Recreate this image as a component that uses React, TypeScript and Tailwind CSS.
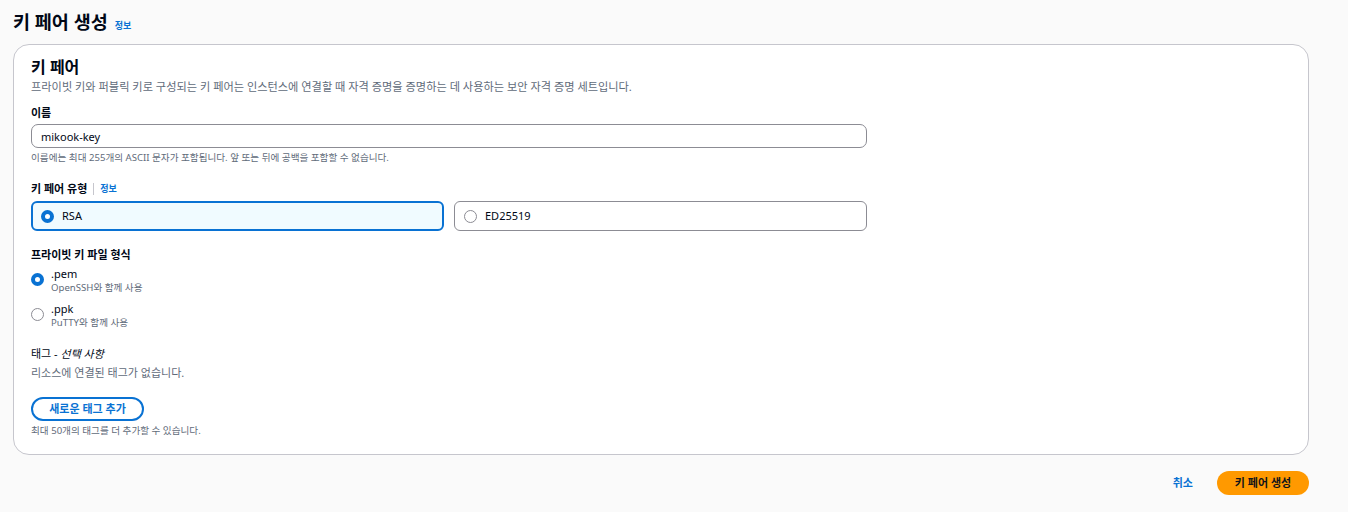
import React, { useState } from 'react';

const font = { fontFamily: '"Noto Sans", "Noto Sans CJK KR", sans-serif' };

function Radio({ checked }: { checked: boolean }) {
  return checked ? (
    <span className="inline-block w-[13px] h-[13px] rounded-full border-[4px] border-[#0972d3] bg-white shrink-0" />
  ) : (
    <span className="inline-block w-[13px] h-[13px] rounded-full border border-[#8c8c94] bg-white shrink-0" />
  );
}

export default function App() {
  const [name, setName] = useState('mikook-key');
  const [keyType, setKeyType] = useState('RSA');
  const [format, setFormat] = useState('pem');

  return (
    <div className="min-h-screen bg-[#fafafa] text-[#000716] px-[13px] pt-[6px]" style={font}>
      <div className="flex items-baseline gap-[7px] h-[32px]">
        <h1 className="text-[18.5px] font-bold leading-[32px]">키 페어 생성</h1>
        <a className="text-[9px] font-bold text-[#0972d3]">정보</a>
      </div>

      <div className="mt-[6px] bg-white border border-[#c6c6cd] rounded-[16px] px-[17px] pt-[12px] pb-[16px] w-[1296px]">
        <h2 className="text-[16px] font-bold leading-[20px]">키 페어</h2>
        <p className="text-[11.2px] text-[#5f6b7a] leading-[16px] mt-[2px]">
          프라이빗 키와 퍼블릭 키로 구성되는 키 페어는 인스턴스에 연결할 때 자격 증명을 증명하는 데 사용하는 보안 자격 증명 세트입니다.
        </p>

        <div className="mt-[10px] w-[836px]">
          <label className="block text-[11px] font-bold leading-[16px]">이름</label>
          <input
            value={name}
            onChange={(e) => setName(e.target.value)}
            className="mt-[3px] w-full h-[24px] border border-[#8c8c94] rounded-[7px] px-[9px] text-[11px] outline-none"
          />
          <p className="text-[9.6px] text-[#5f6b7a] leading-[14px] mt-[3px]">
            이름에는 최대 255개의 ASCII 문자가 포함됩니다. 앞 또는 뒤에 공백을 포함할 수 없습니다.
          </p>
        </div>

        <div className="mt-[16px] w-[836px]">
          <div className="flex items-center gap-[6px] text-[11px] leading-[16px]">
            <span className="font-bold">키 페어 유형</span>
            <span className="w-px h-[12px] bg-[#c6c6cd]" />
            <a className="text-[9px] font-bold text-[#0972d3]">정보</a>
          </div>
          <div className="mt-[4px] grid grid-cols-2 gap-[10px]">
            {['RSA', 'ED25519'].map((t) => (
              <button
                key={t}
                onClick={() => setKeyType(t)}
                className={
                  keyType === t
                    ? 'h-[30px] flex items-center gap-[8px] px-[8px] rounded-[6px] border-2 border-[#0972d3] bg-[#f0fbff] text-[11px] text-left'
                    : 'h-[30px] flex items-center gap-[8px] px-[9px] rounded-[6px] border border-[#8c8c94] bg-white text-[11px] text-left'
                }
              >
                <Radio checked={keyType === t} />
                {t}
              </button>
            ))}
          </div>
        </div>

        <div className="mt-[16px]">
          <div className="text-[11px] font-bold leading-[16px]">프라이빗 키 파일 형식</div>
          <div className="mt-[3px] flex flex-col gap-[6px]">
            {[
              { id: 'pem', label: '.pem', sub: 'OpenSSH와 함께 사용' },
              { id: 'ppk', label: '.ppk', sub: 'PuTTY와 함께 사용' },
            ].map((o) => (
              <div key={o.id} className="flex gap-[7px] cursor-pointer" onClick={() => setFormat(o.id)}>
                <div className="pt-[2px]">
                  <Radio checked={format === o.id} />
                </div>
                <div>
                  <div className="text-[11px] leading-[15px]">{o.label}</div>
                  <div className="text-[9.6px] text-[#5f6b7a] leading-[14px]">{o.sub}</div>
                </div>
              </div>
            ))}
          </div>
        </div>

        <div className="mt-[16px]">
          <div className="text-[11px] leading-[16px]">
            태그 - <i>선택 사항</i>
          </div>
          <p className="text-[11px] text-[#5f6b7a] leading-[16px] mt-[3px]">리소스에 연결된 태그가 없습니다.</p>
          <button className="mt-[16px] h-[24px] w-[113px] rounded-full border-2 border-[#0972d3] text-[#0972d3] text-[11px] font-bold">
            새로운 태그 추가
          </button>
          <p className="text-[9.6px] text-[#5f6b7a] leading-[14px] mt-[3px]">최대 50개의 태그를 더 추가할 수 있습니다.</p>
        </div>
      </div>

      <div className="w-[1296px] flex justify-end items-center gap-[24px] mt-[16px]">
        <button className="text-[11px] font-bold text-[#0972d3]">취소</button>
        <button className="h-[24px] w-[92px] rounded-full bg-[#ff9900] text-[11px] font-bold text-[#0f141a]">
          키 페어 생성
        </button>
      </div>
    </div>
  );
}
